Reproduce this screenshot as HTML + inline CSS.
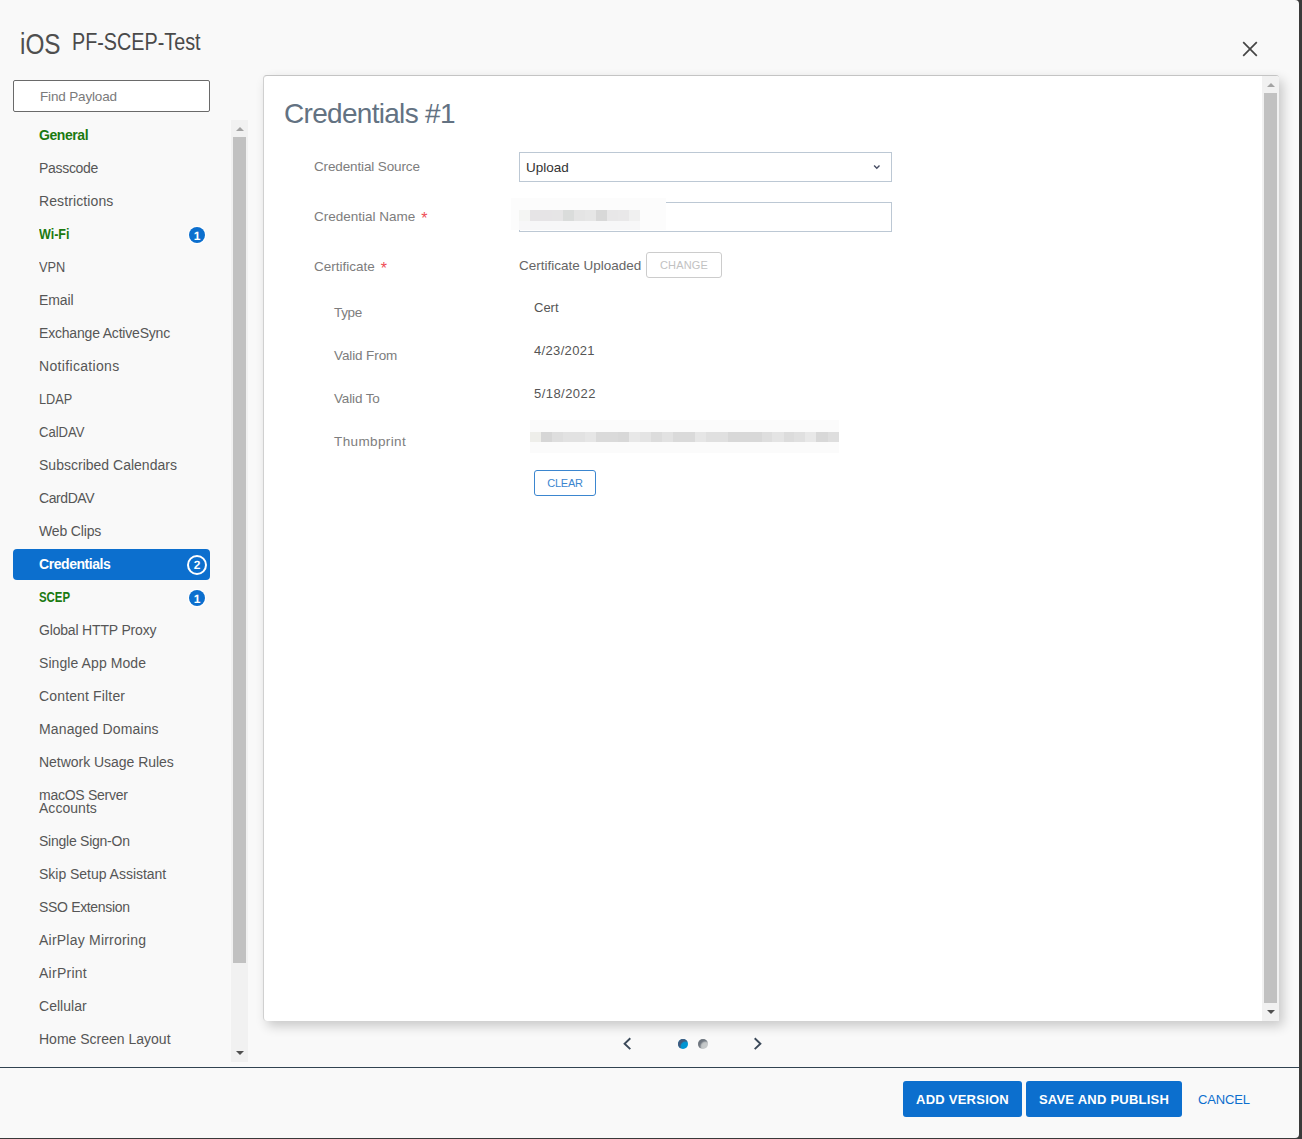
<!DOCTYPE html>
<html lang="en">
<head>
<meta charset="utf-8">
<title>iOS PF-SCEP-Test</title>
<style>
*{box-sizing:border-box;margin:0;padding:0}
html,body{width:1302px;height:1139px;overflow:hidden}
body{background:#3a3a3a;font-family:"Liberation Sans",Arial,sans-serif;font-size:14px;color:#565656;position:relative}
.modal{position:absolute;left:-3px;top:0;width:1302px;height:1138px;background:#f9f9f9;border-radius:4px;overflow:hidden}
.abs{position:absolute}
.hdr-os{position:absolute;left:23px;top:27px;font-size:29px;line-height:34px;color:#4f4f4f;transform:scaleX(.84);transform-origin:0 0;white-space:nowrap}
.hdr-name{position:absolute;left:75px;top:25px;font-size:23px;line-height:34px;color:#4a4a4a;transform:scaleX(.86);transform-origin:0 0;white-space:nowrap}
.close{position:absolute;left:1245px;top:40.5px;width:16px;height:16px}
.search{position:absolute;left:16px;top:80px;width:197px;height:32px;border:1px solid #6a6a6a;border-radius:2px;background:#fff;padding-left:26px;line-height:31px;color:#7a7a7a;font-size:13.5px;letter-spacing:-.16px}
.nav{position:absolute;left:0;top:119px;width:234px;list-style:none}
.nav li{height:33px;line-height:33px;padding-left:42px;position:relative;white-space:nowrap;color:#565656;font-size:14px}
.nav li.g{color:#1b7a10;font-weight:bold}
.nav li.two{height:46px;line-height:13px;padding-top:10px;white-space:normal}
.nav li.sel{color:#fff;font-weight:bold}
.nav li.sel:before{content:"";position:absolute;left:16px;top:1px;width:197px;height:31px;background:#0c6fce;border-radius:4px;z-index:-1}
.nav{z-index:1}
.badge{position:absolute;left:192px;top:9px;width:32px;height:32px;border-radius:50%;background:#0c6fce;color:#fff;font-size:24px;font-weight:bold;line-height:35px;text-align:center;padding:0;box-shadow:0 0 1px 2.5px #fff;transform:scale(.5);transform-origin:0 0;letter-spacing:0;text-rendering:geometricPrecision}
.sel .badge{left:190px;top:7px;width:40px;height:40px;border:4px solid #fff;line-height:34px;box-shadow:none}
.sbar{position:absolute;background:#f1f1f1;width:17px}
.sbar .thumb{position:absolute;left:2px;width:13px;background:#c1c1c1}
.sbar .up,.sbar .dn{position:absolute;left:5px;width:0;height:0;border-left:4px solid transparent;border-right:4px solid transparent}
.sbar .up{top:7px;border-bottom:4px solid #a3a3a3}
.sbar .dn{bottom:7px;border-top:4px solid #505050}
.panel{position:absolute;left:266px;top:75px;width:1016px;height:946px;background:#fff;border:1px solid #d0d0d0;border-top-color:#c4c4c4;border-right:0;border-bottom:0;border-radius:4px 3px 0 4px;box-shadow:4px 5px 12px rgba(0,0,0,.2);overflow:hidden}
.panel h1{position:absolute;left:20px;top:20px;font-size:28px;font-weight:normal;line-height:36px;color:#637282;letter-spacing:-.7px;white-space:nowrap}
.lbl{position:absolute;margin-top:1px;font-size:13.5px;line-height:20px;color:#7d7d7d;white-space:nowrap}
.req{color:#ee4d55;margin-left:6px;font-size:16px;line-height:10px;position:relative;top:3px}
.val{position:absolute;margin-top:1px;font-size:13px;line-height:20px;color:#555;white-space:nowrap}
.field{position:absolute;left:255px;width:373px;height:30px;border:1px solid #bcc8d4;background:#fff;font-size:13.5px;line-height:28px;color:#333;padding-left:6px;padding-top:1px}
.btn-o{position:absolute;height:26px;border:1px solid #ccc;border-radius:3px;font-size:11px;line-height:24px;text-align:center;letter-spacing:.15px;background:#fff}
.foot-line{position:absolute;left:0;top:1067px;width:1302px;height:1px;background:#314351}
.btn{position:absolute;top:1081px;height:36px;border-radius:3px;background:#0c6fce;color:#fff;font-weight:bold;font-size:13px;line-height:38px;text-align:center;letter-spacing:.24px;white-space:nowrap}
</style>
</head>
<body>
<div class="modal">
  <div class="hdr-os">iOS</div>
  <div class="hdr-name">PF-SCEP-Test</div>
  <svg class="close" viewBox="0 0 16 16"><path d="M1.2 1.2 L14.8 14.8 M14.8 1.2 L1.2 14.8" stroke="#454545" stroke-width="1.7" fill="none"/></svg>

  <div class="search">Find Payload</div>

  <ul class="nav">
    <li class="g"><span class="t" style="letter-spacing:-0.43px">General</span></li>
    <li><span class="t" style="letter-spacing:-0.31px">Passcode</span></li>
    <li><span class="t" style="letter-spacing:0.11px">Restrictions</span></li>
    <li class="g"><span class="t" style="display:inline-block;transform:scaleX(0.895);transform-origin:0 50%">Wi-Fi</span><span class="badge">1</span></li>
    <li><span class="t" style="display:inline-block;transform:scaleX(0.913);transform-origin:0 50%">VPN</span></li>
    <li><span class="t" style="letter-spacing:-0.12px">Email</span></li>
    <li><span class="t" style="letter-spacing:-0.19px">Exchange ActiveSync</span></li>
    <li><span class="t" style="letter-spacing:0.33px">Notifications</span></li>
    <li><span class="t" style="display:inline-block;transform:scaleX(0.907);transform-origin:0 50%">LDAP</span></li>
    <li><span class="t" style="display:inline-block;transform:scaleX(0.934);transform-origin:0 50%">CalDAV</span></li>
    <li><span class="t" style="letter-spacing:0.01px">Subscribed Calendars</span></li>
    <li><span class="t" style="letter-spacing:-0.42px">CardDAV</span></li>
    <li><span class="t" style="letter-spacing:-0.16px">Web Clips</span></li>
    <li class="sel"><span class="t" style="letter-spacing:-0.44px">Credentials</span><span class="badge">2</span></li>
    <li class="g"><span class="t" style="display:inline-block;transform:scaleX(0.815);transform-origin:0 50%">SCEP</span><span class="badge">1</span></li>
    <li><span class="t" style="letter-spacing:-0.18px">Global HTTP Proxy</span></li>
    <li><span class="t" style="letter-spacing:0.08px">Single App Mode</span></li>
    <li><span class="t" style="letter-spacing:0.15px">Content Filter</span></li>
    <li><span class="t" style="letter-spacing:0.15px">Managed Domains</span></li>
    <li><span class="t" style="letter-spacing:-0.03px">Network Usage Rules</span></li>
    <li class="two"><span class="t" style="letter-spacing:-0.27px">macOS Server</span><br><span class="t" style="letter-spacing:0.03px">Accounts</span></li>
    <li><span class="t" style="letter-spacing:-0.25px">Single Sign-On</span></li>
    <li><span class="t" style="letter-spacing:-0.02px">Skip Setup Assistant</span></li>
    <li><span class="t" style="letter-spacing:-0.33px">SSO Extension</span></li>
    <li><span class="t" style="letter-spacing:0.22px">AirPlay Mirroring</span></li>
    <li><span class="t" style="letter-spacing:0.26px">AirPrint</span></li>
    <li><span class="t" style="letter-spacing:0.03px">Cellular</span></li>
    <li><span class="t" style="letter-spacing:0.00px">Home Screen Layout</span></li>
  </ul>
  <div class="sbar" style="left:234px;top:120px;height:942px"><i class="up"></i><div class="thumb" style="top:17px;height:826px"></div><i class="dn"></i></div>

  <div class="panel">
    <h1>Credentials #1</h1>
    <div class="lbl" style="left:50px;top:80px;letter-spacing:-.13px">Credential Source</div>
    <div class="field" style="top:76px">Upload</div>
    <svg class="abs" style="left:608px;top:88px" width="9" height="7" viewBox="0 0 9 7"><path d="M2.1 1.6 L4.8 4.3 L7.5 1.6" stroke="#474d63" stroke-width="1.4" fill="none"/></svg>
    <div class="lbl" style="left:50px;top:130px">Credential Name<span class="req">*</span></div>
    <div class="field" style="top:126px"></div>
    <div class="abs" style="left:247px;top:122px;width:155px;height:32px;background:#fcfcfc">
      <div class="abs" style="left:0;top:12px;width:129px;height:11px;background:linear-gradient(90deg,#fcfcfc 0,#fcfcfc 7.8px,#f4f5f3 7.8px,#f4f5f3 18.6px,#e6e4e6 18.6px,#e6e4e6 29.7px,#e6e4e6 29.7px,#e6e4e6 40.7px,#e6e5e6 40.7px,#e6e5e6 51.8px,#dadcdb 51.8px,#dadcdb 63.0px,#e4e4e4 63.0px,#e4e4e4 74.0px,#e6e6e6 74.0px,#e6e6e6 85.0px,#d8d8d8 85.0px,#d8d8d8 96.0px,#e8e7e8 96.0px,#e8e7e8 107.0px,#e9e8e9 107.0px,#e9e8e9 118.0px,#f0f0f0 118.0px,#f0f0f0 129.0px)"></div>
      <div class="abs" style="left:8px;top:23px;width:121px;height:9px;background:#f7f7f8"></div>
    </div>
    <div class="lbl" style="left:50px;top:180px">Certificate<span class="req">*</span></div>
    <div class="lbl" style="left:255px;top:179px;color:#666">Certificate Uploaded</div>
    <div class="btn-o" style="left:382px;top:176px;width:76px;color:#c2c2c2">CHANGE</div>
    <div class="lbl" style="left:70px;top:226px;letter-spacing:-.37px">Type</div>
    <div class="val" style="left:270px;top:221px">Cert</div>
    <div class="lbl" style="left:70px;top:269px;letter-spacing:-.11px">Valid From</div>
    <div class="val" style="left:270px;top:264px;letter-spacing:.34px">4/23/2021</div>
    <div class="lbl" style="left:70px;top:312px;letter-spacing:-.13px">Valid To</div>
    <div class="val" style="left:270px;top:307px;letter-spacing:.45px">5/18/2022</div>
    <div class="lbl" style="left:70px;top:355px;letter-spacing:.38px">Thumbprint</div>
    <div class="abs" style="left:266px;top:344px;width:309px;height:33px;background:#fbfbfb">
      <div class="abs" style="left:0;top:12px;width:309px;height:10px;background:linear-gradient(90deg,#eeeeea 0.4px,#eeeeea 10.9px,#d6d6d6 10.9px,#d6d6d6 21.9px,#dedede 21.9px,#dedede 33.1px,#e2e2e2 33.1px,#e2e2e2 55.3px,#e6e6e6 55.3px,#e6e6e6 66.3px,#dadada 66.3px,#dadada 87.9px,#d8d8d8 87.9px,#d8d8d8 99.2px,#e8e8e8 99.2px,#e8e8e8 110.1px,#e4e4e4 110.1px,#e4e4e4 121.1px,#dcdcdc 121.1px,#dcdcdc 132.3px,#e2e2e2 132.3px,#e2e2e2 143.3px,#dadada 143.3px,#dadada 165.0px,#e6e6e6 165.0px,#e6e6e6 175.9px,#e0e0e0 175.9px,#e0e0e0 198.1px,#d8d8d8 198.1px,#d8d8d8 231.6px,#dedede 231.6px,#dedede 242.5px,#e4e4e4 242.5px,#e4e4e4 253.8px,#dcdcdc 253.8px,#dcdcdc 264.2px,#e0e0e0 264.2px,#e0e0e0 275.2px,#e8e8e8 275.2px,#e8e8e8 286.4px,#d8d8d8 286.4px,#d8d8d8 298.2px,#dedede 298.2px,#dedede 308.6px)"></div>
    </div>
    <div class="btn-o" style="left:270px;top:394px;width:62px;border-color:#3b86cf;color:#3b86cf;letter-spacing:-.2px">CLEAR</div>
    <div class="sbar" style="left:998px;top:0;height:945px"><i class="up"></i><div class="thumb" style="top:17px;height:910px"></div><i class="dn"></i></div>
  </div>

  <svg class="abs" style="left:625px;top:1036px" width="12" height="16" viewBox="0 0 12 16"><path d="M8.3 2.3 L2.6 7.7 L8.3 13.1" stroke="#3b4959" stroke-width="1.9" fill="none"/></svg>
  <svg class="abs" style="left:755px;top:1036px" width="12" height="16" viewBox="0 0 12 16"><path d="M2.7 2.3 L8.4 7.7 L2.7 13.1" stroke="#3b4959" stroke-width="1.9" fill="none"/></svg>
  <div class="abs" style="left:681px;top:1039px;width:10px;height:10px;border-radius:50%;background:#0095d3;box-shadow:inset 2.5px 2.5px 1px rgba(72,86,118,.95)"></div>
  <div class="abs" style="left:701px;top:1039px;width:10px;height:10px;border-radius:50%;background:#c6c9ca;box-shadow:inset 2.5px 2.5px 1.5px rgba(100,108,118,.9)"></div>
  <div class="foot-line"></div>
  <div class="btn" style="left:906px;width:119px">ADD VERSION</div>
  <div class="btn" style="left:1029px;width:156px">SAVE AND PUBLISH</div>
  <div class="btn" style="left:1201px;width:52px;background:none;color:#0c6fce;font-weight:normal;font-size:13px;letter-spacing:-.15px">CANCEL</div>
</div>
</body>
</html>
